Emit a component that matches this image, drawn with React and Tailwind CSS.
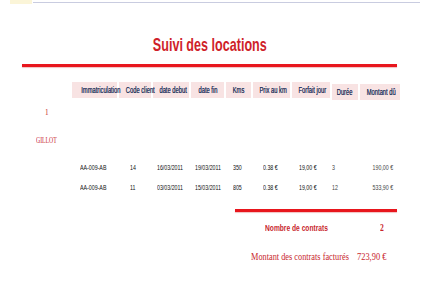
const headers = [
  "Immatriculation",
  "Code client",
  "date debut",
  "date fin",
  "Kms",
  "Prix au km",
  "Forfait jour",
  "Durée",
  "Montant dû",
];

const rows = [
  ["AA-009-AB", "14", "16/03/2011", "19/03/2011", "350", "0.38 €", "19,00 €", "3", "190,00 €"],
  ["AA-009-AB", "11", "03/03/2011", "15/03/2011", "805", "0.38 €", "19,00 €", "12", "533,90 €"],
];

// left padding of each data column, picked off the picture
const cellPad = [
  "pl-[8px]",
  "pl-[11px]",
  "pl-[4px]",
  "pl-[4px]",
  "pl-[7px]",
  "pl-[10px]",
  "pl-[7px]",
  "pl-0",
  "pr-[7px] text-right",
];

const grid =
  "grid grid-cols-[45px_32px_36px_33px_25px_37px_38px_26px_40px] gap-x-[2px]";

function Squeezed({ className = "", children }) {
  return (
    <span className={`inline-block whitespace-nowrap ${className}`}>
      {children}
    </span>
  );
}

export default function App() {
  return (
    <div className="w-[440px] h-[283px] bg-white overflow-hidden font-['Liberation_Sans',Arial,sans-serif]">
      {/* top strip */}
      <div className="flex h-[5px] items-start">
        <div className="ml-[10px] w-[22px] h-[4px] bg-[#fbf5d8]" />
        <div className="mt-[2px] ml-[1px] w-[387px] h-px bg-[#c9cce0]" />
      </div>

      {/* Title */}
      <div className="mt-[30px] ml-[22px] w-[375px] text-center h-[20px] leading-[20px]">
        <Squeezed className="text-[18.5px] font-bold text-[#cf1f2a] scale-x-[0.68]">
          Suivi des locations
        </Squeezed>
      </div>
      <div className="mt-[9px] ml-[22px] w-[375px] h-[3px] bg-[#e8161d] shadow-[0_1px_1px_rgba(200,0,0,0.25)]" />

      {/* Header */}
      <div className={`mt-[15px] ml-[72px] ${grid}`}>
        {headers.map((h, i) => (
          <div
            key={h}
            className={`h-[16px] leading-[16px] bg-[#f8e3e3] text-center text-[8.5px] text-[#2e3b62] [text-shadow:0_0_0.5px_#2e3b62] ${
              i >= 7 ? "translate-y-[2px]" : ""
            }`}
          >
            <Squeezed className="scale-x-[0.68]">{h}</Squeezed>
          </div>
        ))}
      </div>

      {/* Groupe */}
      <div className="mt-[8px] ml-[45px] h-[12px] leading-[12px] font-['Liberation_Serif',serif] text-[9px] text-[#c8262d]">
        <Squeezed className="origin-left scale-x-[0.8]">1</Squeezed>
      </div>
      <div className="mt-[16px] ml-[36px] h-[12px] leading-[12px] font-['Liberation_Serif',serif] text-[9px] text-[#c8262d]">
        <Squeezed className="origin-left scale-x-[0.64]">GILLOT</Squeezed>
      </div>

      {/* Lignes */}
      <div className="mt-[16px] ml-[72px] flex flex-col gap-[8px]">
        {rows.map((r, ri) => (
          <div key={ri} className={`${grid} h-[12px] leading-[12px] text-[8px]`}>
            {r.map((v, i) => (
              <div
                key={i}
                className={`${cellPad[i]} ${i >= 7 ? "text-[#444]" : "text-[#111]"}`}
              >
                <Squeezed
                  className={`${i === 8 ? "origin-right" : "origin-left"} scale-x-[0.66]`}
                >
                  {v}
                </Squeezed>
              </div>
            ))}
          </div>
        ))}
      </div>

      {/* Totaux */}
      <div className="mt-[15px] ml-[235px] w-[162px] h-[3px] bg-[#e8161d] shadow-[0_1px_1px_rgba(200,0,0,0.25)]" />
      <div className="mt-[10px] ml-[265px] flex h-[12px] leading-[12px] text-[#c8262d]">
        <div className="w-[115px] text-[9px] font-bold">
          <Squeezed className="origin-left scale-x-[0.74]">Nombre de contrats</Squeezed>
        </div>
        <div className="font-['Liberation_Serif',serif] text-[9.5px] font-bold">
          <Squeezed className="origin-left scale-x-[0.8]">2</Squeezed>
        </div>
      </div>
      <div className="mt-[17px] ml-[251px] flex h-[12px] leading-[12px] font-['Liberation_Serif',serif] text-[10.5px] text-[#c8262d]">
        <div className="w-[106px]">
          <Squeezed className="origin-left scale-x-[0.79]">
            Montant des contrats facturés
          </Squeezed>
        </div>
        <div>
          <Squeezed className="origin-left scale-x-[0.8]">723,90 €</Squeezed>
        </div>
      </div>
    </div>
  );
}
